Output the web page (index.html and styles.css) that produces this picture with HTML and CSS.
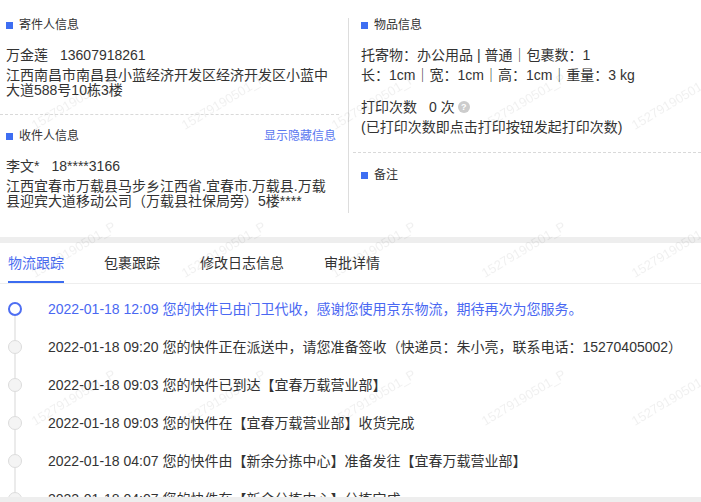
FILE: index.html
```html
<!DOCTYPE html>
<html lang="zh-CN">
<head>
  <meta charset="UTF-8">
  <title>运单详情</title>
  <link rel="stylesheet" href="styles.css">
</head>
<body>
  <div class="info">
    <div class="info-col info-left">
      <div class="sec-title"><span class="sec-mark"></span>寄件人信息</div>
      <div class="person"><span>万金莲</span><span class="phone">13607918261</span></div>
      <div class="addr">江西南昌市南昌县小蓝经济开发区经济开发区小蓝中大道588号10栋3楼</div>
      <div class="dash dash-left"></div>
      <div class="sec-title">
        <span class="sec-mark"></span>收件人信息
        <span class="sec-link">显示隐藏信息</span>
      </div>
      <div class="person person-2"><span>李文*</span><span class="phone">18****3166</span></div>
      <div class="addr">江西宜春市万载县马步乡江西省.宜春市.万载县.万载县迎宾大道移动公司（万载县社保局旁）5楼****</div>
    </div>
    <div class="info-col info-right">
      <div class="sec-title"><span class="sec-mark"></span>物品信息</div>
      <div class="goods">
        <div>托寄物：办公用品 | 普通｜包裹数：1</div>
        <div>长：1cm｜宽：1cm｜高：1cm｜重量：3 kg</div>
      </div>
      <div class="print-row">
        <span>打印次数</span><span class="print-count">0 次</span><span class="help">?</span>
      </div>
      <div class="print-note">(已打印次数即点击打印按钮发起打印次数)</div>
      <div class="dash dash-right"></div>
      <div class="sec-title"><span class="sec-mark"></span>备注</div>
    </div>
  </div>

  <div class="band"></div>

  <div class="tabs">
    <div class="tab active">物流跟踪</div>
    <div class="tab">包裹跟踪</div>
    <div class="tab">修改日志信息</div>
    <div class="tab">审批详情</div>
  </div>

  <ul class="timeline">
    <li class="tl-item current"><span class="tl-axis"><span class="tl-dot"></span></span><span class="tl-text">2022-01-18 12:09 您的快件已由门卫代收，感谢您使用京东物流，期待再次为您服务。</span></li>
    <li class="tl-item"><span class="tl-axis"><span class="tl-dot"></span></span><span class="tl-text">2022-01-18 09:20 您的快件正在派送中，请您准备签收（快递员：朱小亮，联系电话：15270405002）</span></li>
    <li class="tl-item"><span class="tl-axis"><span class="tl-dot"></span></span><span class="tl-text">2022-01-18 09:03 您的快件已到达【宜春万载营业部】</span></li>
    <li class="tl-item"><span class="tl-axis"><span class="tl-dot"></span></span><span class="tl-text">2022-01-18 09:03 您的快件在【宜春万载营业部】收货完成</span></li>
    <li class="tl-item"><span class="tl-axis"><span class="tl-dot"></span></span><span class="tl-text">2022-01-18 04:07 您的快件由【新余分拣中心】准备发往【宜春万载营业部】</span></li>
    <li class="tl-item"><span class="tl-axis"><span class="tl-dot"></span></span><span class="tl-text">2022-01-18 04:07 您的快件在【新余分拣中心】分拣完成</span></li>
  </ul>

  <div class="bottom-band"></div>

  <svg class="watermark" width="701" height="502">
    <defs>
      <pattern id="wm" x="0" y="0" width="150" height="148" patternUnits="userSpaceOnUse">
        <text x="35" y="130" transform="rotate(-31 35 130)">15279190501_P</text>
      </pattern>
    </defs>
    <rect width="701" height="502" fill="url(#wm)"></rect>
  </svg>
</body>
</html>
```

FILE: styles.css
```css
body {
  margin: 0;
  height: 100vh;
  overflow: hidden;
  background: #fff;
  color: #333;
  font-family: "Liberation Sans", "Noto Sans CJK SC", sans-serif;
  font-size: 14px;
}

.info {
  display: flex;
  height: 237px;
  padding-top: 18px;
  box-sizing: border-box;
}

.info-col {
  box-sizing: border-box;
}

.info-left {
  width: 349px;
  height: 195px;
  padding: 0 12px 0 6px;
  border-right: 1px solid #ddd;
}

.info-right {
  flex: 1;
  padding-left: 12px;
}

.sec-title {
  display: flex;
  align-items: center;
  font-size: 12px;
  line-height: 14px;
}

.sec-mark {
  flex: none;
  width: 7px;
  height: 7px;
  background: #3e6ef2;
  margin-right: 6px;
}

.sec-link {
  margin-left: auto;
  color: #5b78f0;
  cursor: pointer;
}

.person {
  margin-top: 13px;
  line-height: 20px;
}

.person-2 {
  margin-top: 13px;
}

.phone {
  margin-left: 12px;
}

.addr {
  margin-top: 3px;
  line-height: 15px;
}

.dash {
  border-top: 1px dashed #d9d9d9;
}

.dash-left {
  margin: 16px -3px 14px -6px;
}

.dash-right {
  margin: 15px 0 15px -8px;
}

.goods {
  margin-top: 13px;
  line-height: 20px;
}

.print-row {
  display: flex;
  align-items: center;
  margin-top: 12px;
  line-height: 20px;
}

.print-count {
  margin-left: 12px;
}

.help {
  flex: none;
  width: 12px;
  height: 12px;
  margin-left: 3px;
  border-radius: 50%;
  background: #ccc;
  color: #fff;
  font-size: 9px;
  font-weight: bold;
  line-height: 12px;
  text-align: center;
}

.print-note {
  line-height: 20px;
}

.band {
  height: 6px;
  background: #eee;
}

.tabs {
  display: flex;
  padding-left: 8px;
  border-bottom: 1px solid #eee;
}

.tab {
  margin-right: 40px;
  padding: 10px 0 8px;
  line-height: 20px;
  border-bottom: 2px solid transparent;
  cursor: pointer;
}

.tab.active {
  color: #4a6cf0;
  border-bottom-color: #3b6cf0;
}

.timeline {
  list-style: none;
  margin: 0;
  padding: 6px 0 0;
}

.tl-item {
  display: flex;
  height: 38px;
  align-items: stretch;
}

.tl-axis {
  display: flex;
  flex-direction: column;
  align-items: center;
  width: 14px;
  margin-left: 8px;
}

.tl-axis::before,
.tl-axis::after {
  content: "";
  flex: 1;
  width: 2px;
  background: #ebebeb;
}

.current .tl-axis::before {
  background: transparent;
}

.tl-dot {
  flex: none;
  width: 14px;
  height: 14px;
  box-sizing: border-box;
  border: 1px solid #dcdcdc;
  border-radius: 50%;
  background: #f4f4f4;
}

.current .tl-dot {
  border: 2px solid #4e6ef2;
  background: #fff;
}

.tl-text {
  margin-left: 26px;
  align-self: center;
  line-height: 20px;
  white-space: nowrap;
}

.current .tl-text {
  color: #4a68f2;
}

.bottom-band {
  position: fixed;
  left: 0;
  right: 0;
  bottom: 0;
  height: 5px;
  background: #eee;
}

.watermark {
  position: fixed;
  top: 0;
  left: 0;
  pointer-events: none;
}

.watermark text {
  font-family: "Liberation Sans", sans-serif;
  font-size: 13px;
  fill: rgba(0, 0, 0, 0.06);
}
```
